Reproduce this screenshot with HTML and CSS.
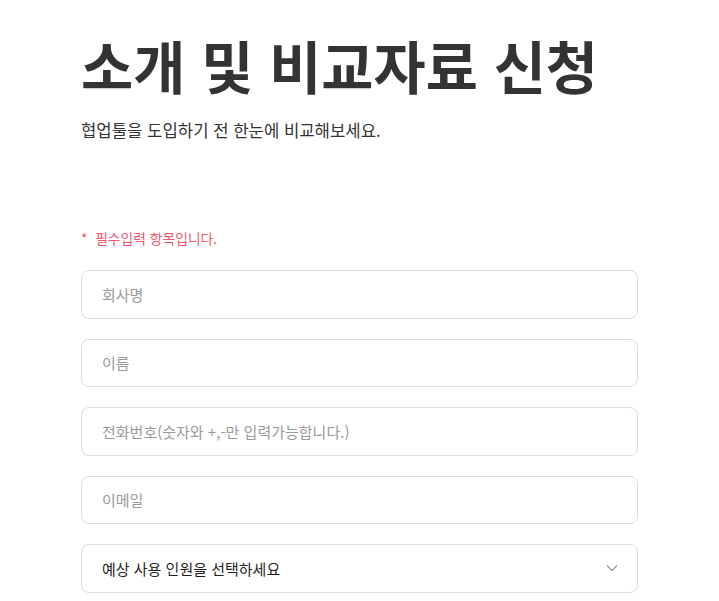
FILE: index.html
```html
<!DOCTYPE html>
<html lang="ko">
  <head>
    <meta charset="UTF-8" />
    <meta name="viewport" content="width=device-width, initial-scale=1.0" />
    <title>소개 및 비교자료 신청</title>
    <link rel="stylesheet" href="styles.css">
  </head>
  <body>
    <div class="wrap">
      <div class="head">
        <h1>소개 및 비교자료 신청</h1>
        <p class="sub">협업툴을 도입하기 전 한눈에 비교해보세요.</p>
      </div>

      <form class="form">
        <p class="req">*&nbsp; 필수입력 항목입니다.</p>
        <input class="field" type="text" placeholder="회사명" />
        <input class="field" type="text" placeholder="이름" />
        <input class="field" type="text" placeholder="전화번호(숫자와 +,-만 입력가능합니다.)" />
        <input class="field" type="text" placeholder="이메일" />
        <div class="select">
          <span>예상 사용 인원을 선택하세요</span>
          <svg width="14" height="14" viewBox="0 0 14 14">
            <path d="M2 4.5 L7 9.5 L12 4.5" fill="none" stroke="#999" stroke-width="1.3" />
          </svg>
        </div>
      </form>
    </div>
  </body>
</html>
```

FILE: styles.css
```css
body {
  margin: 0;
  background: #fff;
  font-family: "Noto Sans CJK KR", "Noto Sans", sans-serif;
  color: #333;
}

.wrap {
  width: 557px;
  padding: 22px 0 0 81px;
}

.head h1 {
  margin: 0;
  font-size: 56.7px;
  font-weight: 700;
  line-height: 84px;
  color: #333;
}

.sub {
  margin: 12px 0 0;
  font-size: 16.7px;
  line-height: 24px;
  color: #333;
}

.form {
  display: flex;
  flex-direction: column;
  gap: 20px;
  margin-top: 86px;
}

.req {
  margin: 0 0 2px;
  font-size: 13.8px;
  line-height: 20px;
  color: #f2566c;
}

.field,
.select {
  box-sizing: border-box;
  height: 48.5px;
  width: 100%;
  border: 1px solid #dcdcdc;
  border-radius: 8px;
  padding: 0 20px;
  font-family: inherit;
  font-size: 15px;
  color: #333;
  background: #fff;
  outline: none;
}

.field::placeholder {
  color: #999;
}

.select {
  display: flex;
  align-items: center;
  justify-content: space-between;
  color: #1f1f1f;
  padding-right: 18px;
}
```
